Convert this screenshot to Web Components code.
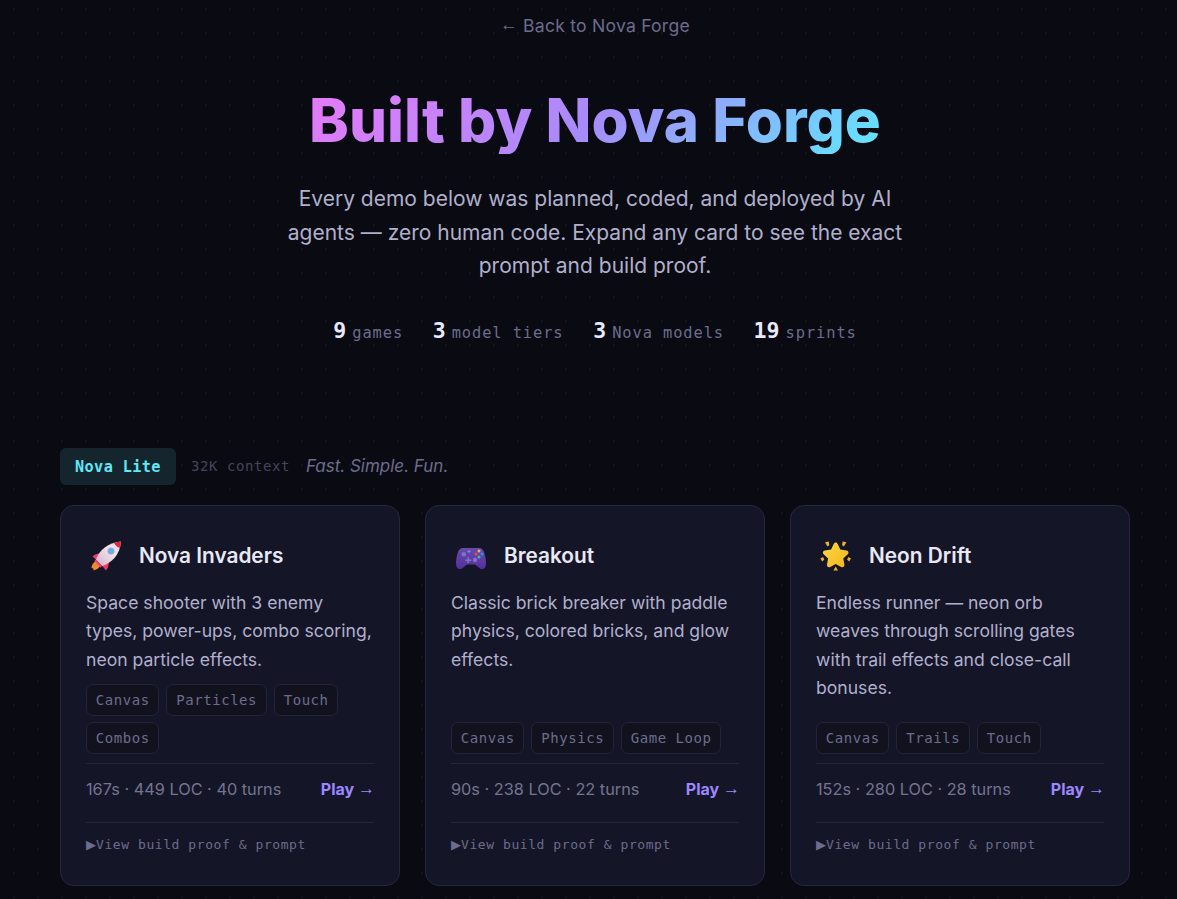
<!DOCTYPE html>
<html><head><meta charset="utf-8">
<style>
html,body{margin:0;padding:0;background:#0a0a12;}
body{height:899px;overflow:hidden;font-family:Inter,"Noto Sans",sans-serif;color:#e8e8f0;
background-color:#0a0a12;
background-image:radial-gradient(circle at 1px 1px,rgba(255,255,255,.035) 1px,transparent 0);
background-size:24px 24px;background-position:13px 8px;}
</style></head><body>
<page-header></page-header>
<tier-section name="Nova Lite" context="32K context" tagline="Fast. Simple. Fun.">
  <game-card title="Nova Invaders" stats="167s · 449 LOC · 40 turns">
    <svg slot="icon" viewBox="0 0 32 32" width="32" height="32">
      <defs>
        <linearGradient id="rb" x1="0" y1="1" x2="1" y2="0"><stop offset="0" stop-color="#d3b3c6"/><stop offset=".6" stop-color="#f0e2ec"/><stop offset="1" stop-color="#ecdde8"/></linearGradient>
      </defs>
      <path d="M1.500 28c.5-4 2.500-6.500 5-6.500l3.500 3.500c0 2.500-2.500 4.500-6.500 5.500.6-1.300-.3-2.500-2-2.500z" fill="#f08a2a"/>
      <path d="M2.500 16.500c2.500-2.500 6-3.500 10-2.500l-4.500 7.500z" fill="#f0386e"/>
      <path d="M16 30.500c2-2.500 3.300-6 2.500-10.500l-7 5z" fill="#f0386e"/>
      <path d="M6 19.500C9 10.500 18 2.500 31 1.500c-1 13.500-9.500 21.500-19 24.500z" fill="url(#rb)"/>
      <path d="M6 19.500l6 6.500-1.800 1.500-5.900-6.400z" fill="#f0487c"/>
      <path d="M24 3c2.200-.8 4.500-1.300 7-1.500-.2 2.400-.7 4.500-1.400 6.600-2.100-.8-4.600-3-5.600-5.100z" fill="#e8223f"/>
      <circle cx="21" cy="11" r="3.500" fill="#a9a6c6"/><circle cx="21" cy="11" r="2.600" fill="#62aef5"/>
    </svg>
    <span slot="desc">Space shooter with 3 enemy types, power-ups, combo scoring, neon particle effects.</span>
    <tag-chip>Canvas</tag-chip><tag-chip>Particles</tag-chip><tag-chip>Touch</tag-chip><tag-chip>Combos</tag-chip>
  </game-card>
  <game-card title="Breakout" stats="90s · 238 LOC · 22 turns">
    <svg slot="icon" viewBox="0 0 32 32" width="32" height="32">
      <defs>
        <linearGradient id="gp" x1="0" y1="0" x2="0" y2="1"><stop offset="0" stop-color="#674bae"/><stop offset="1" stop-color="#54309a"/></linearGradient>
      </defs>
      <path d="M8 8h16c3 0 4.500 2 5.300 5 1 3.500 2.200 8 1.500 12.500-.4 3-3.400 4.600-5.800 3L20 24.500H12l-5 4c-2.400 1.600-5.400 0-5.800-3C.5 21 1.700 16.500 2.700 13 3.500 10 5 8 8 8z" fill="url(#gp)"/>
      <circle cx="8.800" cy="14.300" r="2.200" fill="#8272c4"/>
      <circle cx="20" cy="20" r="2.200" fill="#8272c4"/>
      <path d="M12.500 17.300h1.600v2.100h2.100v1.600h-2.100v2.100h-1.600V21h-2.100v-1.600h2.100z" fill="#8272c4"/>
      <rect x="12.500" y="10.500" width="3" height="2" rx="1" fill="#9488cc"/>
      <circle cx="24" cy="11" r="1.500" fill="#f4b82e"/>
      <circle cx="21" cy="14" r="1.500" fill="#e84a5a"/>
      <circle cx="27" cy="14" r="1.500" fill="#2f8cf0"/>
      <circle cx="24" cy="17" r="1.500" fill="#27c98a"/>
    </svg>
    <span slot="desc">Classic brick breaker with paddle physics, colored bricks, and glow effects.</span>
    <tag-chip>Canvas</tag-chip><tag-chip>Physics</tag-chip><tag-chip>Game Loop</tag-chip>
  </game-card>
  <game-card title="Neon Drift" stats="152s · 280 LOC · 28 turns">
    <svg slot="icon" viewBox="0 0 32 32" width="32" height="32">
      <defs>
        <linearGradient id="st" x1="0" y1="0" x2="1" y2="1"><stop offset="0" stop-color="#fcd93f"/><stop offset="1" stop-color="#f2b51f"/></linearGradient>
      </defs>
      <path d="M15.700 2.500c1 0 1.600.6 2 1.500l2.600 5.400 6.200 1c2 .3 2.700 2.400 1.300 3.800l-4.500 4.300 1.100 6.100c.3 2-1.500 3.300-3.300 2.300l-5.400-2.900-5.400 2.900c-1.800 1-3.600-.3-3.300-2.300l1.100-6.100-4.500-4.300c-1.400-1.400-.7-3.500 1.300-3.800l6.200-1L13.700 4c.4-.9 1-1.500 2-1.500z" fill="url(#st)"/>
      <g fill="#eeb026">
        <path d="M5 2.200l3.800-.7.500 3.800-1.800 1.100z"/>
        <path d="M26.400 2.200l-3.800-.7-.5 3.800 1.800 1.100z"/>
        <path d="M.4 18.500l2.600-1.500 1.300 2.400-2 2z"/>
        <path d="M31 18.500l-2.600-1.500-1.300 2.400 2 2z"/>
        <path d="M15.700 26.500l2.300 4h-4.600z"/>
      </g>
    </svg>
    <span slot="desc">Endless runner — neon orb weaves through scrolling gates with trail effects and close-call bonuses.</span>
    <tag-chip>Canvas</tag-chip><tag-chip>Trails</tag-chip><tag-chip>Touch</tag-chip>
  </game-card>
</tier-section>

<template id="hdr-t">
<style>
:host{display:block;text-align:center;padding:16px 47px 0 60px}
a{display:block;height:20px;color:#6c6c8c;font-size:17.6px;line-height:20px;letter-spacing:.22px;text-decoration:none}
.arr{font-family:"Liberation Sans",sans-serif;vertical-align:2px;line-height:0}
h1{margin:51px auto 0;width:fit-content;font-size:60px;line-height:67px;font-weight:800;background:linear-gradient(135deg,#e879f9,#a78bfa 50%,#60e8ff);-webkit-background-clip:text;background-clip:text;color:transparent}
p{margin:28px auto 0;width:640px;font-size:21px;line-height:33.6px;color:#b0b0cc}
.stats{display:flex;justify-content:center;gap:29.6px;margin-top:35.2px;height:26px}
.stat{font:15.4px "DejaVu Sans Mono",monospace;letter-spacing:.9px;color:#6c6c8c;display:flex;align-items:baseline;gap:6px}
b{font:700 21.6px "DejaVu Sans Mono",monospace;letter-spacing:0;color:#e8e8ff}
</style>
<a href="#"><span class="arr">←</span> Back to Nova Forge</a>
<h1>Built by Nova Forge</h1>
<p>Every demo below was planned, coded, and deployed by AI agents — zero human code. Expand any card to see the exact prompt and build proof.</p>
<div class="stats">
<span class="stat"><b>9</b>games</span><span class="stat"><b>3</b>model tiers</span><span class="stat"><b>3</b>Nova models</span><span class="stat"><b>19</b>sprints</span>
</div>
</template>

<template id="sec-t">
<style>
:host{display:block;padding:0 47px 0 60px;margin-top:104px}
.head{display:flex;align-items:center;gap:15px;margin-bottom:20px}
.badge{font:700 15.2px "DejaVu Sans Mono",monospace;letter-spacing:.4px;color:#5ee8f8;background:#15252e;border-radius:6px;padding:1px 15px 0;height:36px;display:flex;align-items:center}
.ctx{font:14px "DejaVu Sans Mono",monospace;letter-spacing:.57px;color:#44445c}
i{font-size:17px;color:#6c6c8c;margin-left:1px}
.grid{display:grid;grid-template-columns:repeat(3,340px);gap:25px}
</style>
<div class="head"><span class="badge"></span><span class="ctx"></span><i></i></div>
<div class="grid"><slot></slot></div>
</template>

<template id="card-t">
<style>
:host{display:flex;flex-direction:column;box-sizing:border-box;height:381px;padding:25px;background:#151528;border:1px solid #26263e;border-radius:14px}
.top{display:flex;align-items:center;gap:17px;margin:6px 0 14px;height:38px}
.ico{width:32px;height:32px;margin-left:4px;flex:none;display:block}
h3{margin:0;font-size:20.8px;font-weight:600;color:#e8e8f4}
.desc{flex:1;margin-bottom:9.8px;font-size:17.6px;line-height:28.4px;color:#b0b0cc}
.tags{display:flex;flex-wrap:wrap;gap:6px 7px;padding-bottom:9px;border-bottom:1px solid #24243a}
.foot{display:flex;justify-content:space-between;align-items:center;height:50px;padding-bottom:8px;border-bottom:1px solid #24243a;font-size:16.3px;color:#74748f}
.play{font-weight:700;font-size:16px;color:#9b87ff;text-decoration:none;margin-right:-1px}
.arr{font-family:"Liberation Sans",sans-serif;font-weight:400;font-size:17px;vertical-align:1.5px;line-height:0}
.proof{font:13px "DejaVu Sans Mono",monospace;letter-spacing:.57px;color:#6c6c8c;margin:13px 0 6px;line-height:18px;display:flex;align-items:center}
.tri{font:13px "DejaVu Sans",sans-serif;letter-spacing:0;width:10px;flex:none}
</style>
<div class="top"><span class="ico"><slot name="icon"></slot></span><h3></h3></div>
<div class="desc"><slot name="desc"></slot></div>
<div class="tags"><slot></slot></div>
<div class="foot"><span class="st"></span><a class="play" href="#">Play <span class="arr">→</span></a></div>
<div class="proof"><span class="tri">▶</span>View build proof &amp; prompt</div>
</template>

<template id="tag-t">
<style>
:host{display:inline-flex;align-items:center;box-sizing:border-box;height:32px;padding:0 8.8px;background:#12121f;border:1px solid #23233a;border-radius:7px;font:14px "DejaVu Sans Mono",monospace;letter-spacing:.55px;color:#6c6c8c}
</style>
<slot></slot>
</template>

<script>
class PageHeader extends HTMLElement{
  connectedCallback(){
    this.attachShadow({mode:"open"}).appendChild(document.getElementById("hdr-t").content.cloneNode(true));
  }
}
class TierSection extends HTMLElement{
  connectedCallback(){
    const s=this.attachShadow({mode:"open"});
    s.appendChild(document.getElementById("sec-t").content.cloneNode(true));
    s.querySelector(".badge").textContent=this.getAttribute("name");
    s.querySelector(".ctx").textContent=this.getAttribute("context");
    s.querySelector("i").textContent=this.getAttribute("tagline");
  }
}
class GameCard extends HTMLElement{
  connectedCallback(){
    const s=this.attachShadow({mode:"open"});
    s.appendChild(document.getElementById("card-t").content.cloneNode(true));
    s.querySelector("h3").textContent=this.getAttribute("title");
    s.querySelector(".st").textContent=this.getAttribute("stats");
  }
}
class TagChip extends HTMLElement{
  connectedCallback(){
    this.attachShadow({mode:"open"}).appendChild(document.getElementById("tag-t").content.cloneNode(true));
  }
}
customElements.define("page-header",PageHeader);
customElements.define("tier-section",TierSection);
customElements.define("game-card",GameCard);
customElements.define("tag-chip",TagChip);
</script>
</body></html>
